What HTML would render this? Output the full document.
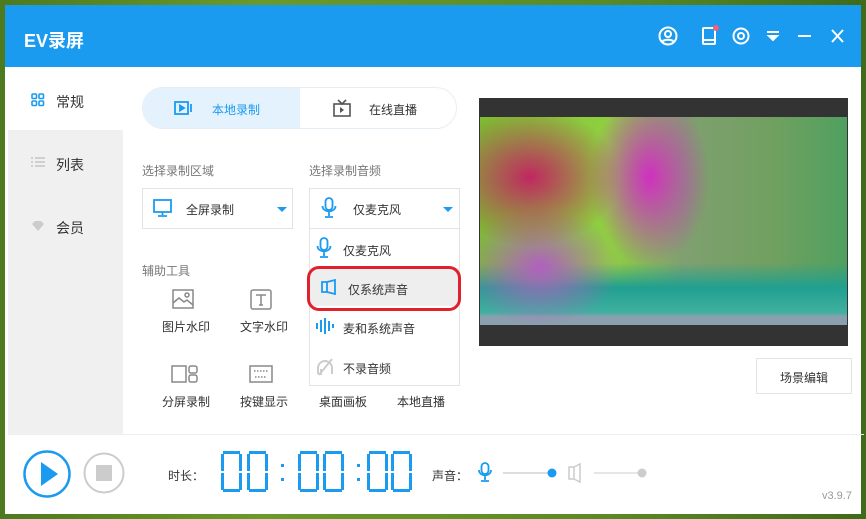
<!DOCTYPE html>
<html><head><meta charset="utf-8"><style>
*{margin:0;padding:0;box-sizing:border-box}
body{width:866px;height:519px;overflow:hidden;background:linear-gradient(90deg,#4d7a1e,#6a9a2a 30%,#5a8a26 70%,#3f6b1a);font-family:"Liberation Sans","Noto Sans CJK SC",sans-serif;position:relative}
.abs{position:absolute}
.win{left:5px;top:5px;width:856px;height:509px;background:#fff}
.hdr{left:5px;top:5px;width:856px;height:62px;background:#1a9bf0}
.t{color:#333;font-size:12px;white-space:nowrap}
.g{color:#777;font-size:12px}
</style></head><body>
<div class="abs win"></div>
<div class="abs hdr"></div>
<div class="abs" style="left:24px;top:27px;color:#fff;font-size:18px;font-weight:bold">EV录屏</div>
<svg class="abs" style="left:650px;top:22px" width="210" height="28" viewBox="0 0 210 28" fill="none" stroke="#fff" stroke-width="2">
<circle cx="18" cy="14" r="8.5"/><circle cx="18" cy="12" r="3"/><path d="M12 20c2-3 10-3 12 0"/>
<rect x="53" y="6" width="12" height="16" rx="1"/><path d="M53 18h12"/><circle cx="66" cy="6" r="3" fill="#f0607a" stroke="none"/>
<circle cx="91" cy="14" r="7.5"/><circle cx="91" cy="14" r="3"/>
<path d="M117 10h12M119 14h8l-4 4z" fill="#fff"/>
<path d="M148 14h13"/>
<path d="M182 8l11 12M193 8l-11 12"/>
</svg>
<div class="abs" style="left:8px;top:130px;width:115px;height:304px;background:#f0f0f0"></div>
<div class="abs" style="left:8px;top:434px;width:856px;height:1px;background:#eee"></div>
<svg class="abs" style="left:31px;top:93px" width="14" height="14" fill="none" stroke="#1a9bf0" stroke-width="1.6"><rect x="1" y="1" width="4.5" height="4.5" rx="1"/><rect x="8" y="1" width="4.5" height="4.5" rx="1"/><rect x="1" y="8" width="4.5" height="4.5" rx="1"/><rect x="8" y="8" width="4.5" height="4.5" rx="1"/></svg>
<div class="abs" style="left:56px;top:92px;font-size:14px;color:#333">常规</div>
<svg class="abs" style="left:31px;top:156px" width="14" height="12" stroke="#bbb" stroke-width="1.3"><path d="M0 2h2M4 2h10M0 6h2M4 6h10M0 10h2M4 10h10"/></svg>
<div class="abs" style="left:56px;top:155px;font-size:14px;color:#333">列表</div>
<svg class="abs" style="left:31px;top:220px" width="14" height="12"><path d="M1 4l3-3h6l3 3-6 7z" fill="#ccc"/></svg>
<div class="abs" style="left:56px;top:218px;font-size:14px;color:#333">会员</div>
<div class="abs" style="left:142px;top:87px;width:315px;height:42px;border:1px solid #e6eef5;border-radius:21px;background:#fff"></div>
<div class="abs" style="left:143px;top:88px;width:157px;height:40px;border-radius:20px 0 0 20px;background:#e3f2fd"></div>
<svg class="abs" style="left:174px;top:100px" width="20" height="16" fill="none" stroke="#1a9bf0" stroke-width="1.8"><rect x="1" y="2" width="13" height="12"/><path d="M17 4v8"/><path d="M6 5.5l4 2.5-4 2.5z" fill="#1a9bf0"/></svg>
<div class="abs" style="left:212px;top:101px;font-size:12px;color:#1a9bf0">本地录制</div>
<svg class="abs" style="left:333px;top:99px" width="18" height="18" fill="none" stroke="#555" stroke-width="1.6"><rect x="1" y="5" width="16" height="12"/><path d="M5 1l4 4 4-4"/><path d="M7 8l4 3-4 3z" fill="#555" stroke="none"/></svg>
<div class="abs" style="left:369px;top:101px;font-size:12px;color:#333">在线直播</div>
<div class="abs g" style="left:142px;top:162px">选择录制区域</div>
<div class="abs g" style="left:309px;top:162px">选择录制音频</div>
<div class="abs" style="left:142px;top:188px;width:151px;height:41px;border:1px solid #e3e3e3"></div>
<svg class="abs" style="left:153px;top:199px" width="20" height="18" fill="none" stroke="#1a9bf0" stroke-width="1.8"><rect x="1" y="1" width="17" height="12"/><path d="M9.5 13v3M5 17h9"/></svg>
<div class="abs t" style="left:186px;top:201px">全屏录制</div>
<div class="abs" style="left:277px;top:207px;border:5px solid transparent;border-top:5px solid #1a9bf0"></div>
<div class="abs" style="left:309px;top:188px;width:151px;height:41px;border:1px solid #e3e3e3"></div>
<svg class="abs" style="left:321px;top:197px" width="16" height="22" fill="none" stroke="#1a9bf0" stroke-width="1.8"><rect x="4.5" y="1" width="7" height="12" rx="3.5"/><path d="M1.5 9c0 7 13 7 13 0M8 15v4M4 20h8"/></svg>
<div class="abs t" style="left:353px;top:201px">仅麦克风</div>
<div class="abs" style="left:443px;top:207px;border:5px solid transparent;border-top:5px solid #1a9bf0"></div>
<div class="abs" style="left:309px;top:229px;width:151px;height:157px;border:1px solid #e3e3e3;border-top:none;background:#fff"></div>
<svg class="abs" style="left:316px;top:237px" width="16" height="22" fill="none" stroke="#1a9bf0" stroke-width="1.8"><rect x="4.5" y="1" width="7" height="12" rx="3.5"/><path d="M1.5 9c0 7 13 7 13 0M8 15v4M4 20h8"/></svg>
<div class="abs t" style="left:343px;top:242px">仅麦克风</div>
<div class="abs" style="left:310px;top:268px;width:149px;height:38px;background:#eee"></div>
<div class="abs" style="left:307px;top:266px;width:154px;height:45px;border:3px solid #e0202a;border-radius:12px"></div>
<svg class="abs" style="left:321px;top:279px" width="16" height="16" fill="none" stroke="#1a9bf0" stroke-width="1.8"><path d="M1 3h5v10H1zM6 3l8-2v14l-8-2"/></svg>
<div class="abs t" style="left:348px;top:281px">仅系统声音</div>
<svg class="abs" style="left:315px;top:318px" width="20" height="16" stroke="#1a9bf0" stroke-width="2"><path d="M2 5v6M6 2v12M10 0v16M14 3v10M18 6v4"/></svg>
<div class="abs t" style="left:343px;top:320px">麦和系统声音</div>
<svg class="abs" style="left:315px;top:357px" width="20" height="20" fill="none" stroke="#ccc" stroke-width="2"><path d="M3 17v-6a7 7 0 0 1 14 0v6M3 17h3v-5M17 2L4 18"/></svg>
<div class="abs t" style="left:343px;top:360px">不录音频</div>
<div class="abs g" style="left:142px;top:262px">辅助工具</div>
<svg class="abs" style="left:172px;top:289px" width="22" height="20" fill="none" stroke="#888" stroke-width="1.5"><rect x="1" y="1" width="20" height="18"/><path d="M1 14l6-5 5 4 3-2 6 5"/><circle cx="15" cy="6" r="2"/></svg>
<div class="abs t" style="left:162px;top:318px">图片水印</div>
<svg class="abs" style="left:250px;top:289px" width="22" height="21" fill="none" stroke="#888" stroke-width="1.5"><rect x="1" y="1" width="20" height="19" rx="2"/><path d="M6 6h10M11 6v10M9 16h4"/></svg>
<div class="abs t" style="left:240px;top:318px">文字水印</div>
<svg class="abs" style="left:171px;top:365px" width="27" height="18" fill="none" stroke="#888" stroke-width="1.5"><rect x="1" y="1" width="14" height="16"/><rect x="18" y="1" width="8" height="7" rx="2"/><rect x="18" y="10" width="8" height="7" rx="2"/></svg>
<div class="abs t" style="left:162px;top:393px">分屏录制</div>
<svg class="abs" style="left:249px;top:365px" width="24" height="18" fill="none" stroke="#888" stroke-width="1.5"><rect x="1" y="1" width="22" height="16"/><path d="M5 6h14M6 12h12" stroke-dasharray="1.5 1.5"/></svg>
<div class="abs t" style="left:240px;top:393px">按键显示</div>
<div class="abs t" style="left:319px;top:393px">桌面画板</div>
<div class="abs t" style="left:397px;top:393px">本地直播</div>
<div class="abs" style="left:479px;top:98px;width:369px;height:248px;background:#333"></div>
<div class="abs" style="left:480px;top:117px;width:367px;height:208px;background:
radial-gradient(ellipse 60px 90px at 170px 60px,#d030c0,transparent),
radial-gradient(ellipse 90px 70px at 50px 60px,#c02860,transparent),
radial-gradient(ellipse 80px 60px at 60px 150px,#b060c0,transparent),
linear-gradient(180deg,transparent 70%,#20a090 82%,#40b0a0 94%,#8aa0b0 96%),
linear-gradient(90deg,#7ac030,#90d040 35%,#80a070 55%,#70a060 80%,#50a060)"></div>
<div class="abs" style="left:756px;top:358px;width:96px;height:36px;border:1px solid #e3e3e3"></div>
<div class="abs t" style="left:780px;top:369px">场景编辑</div>
<svg class="abs" style="left:22px;top:450px" width="52" height="48"><circle cx="25" cy="24" r="22.5" fill="none" stroke="#1a9bf0" stroke-width="2.5"/><path d="M19 12v24l17-12z" fill="#1a9bf0"/></svg>
<svg class="abs" style="left:83px;top:452px" width="44" height="44"><circle cx="21" cy="21" r="19.5" fill="none" stroke="#ccc" stroke-width="2"/><rect x="13" y="13" width="16" height="16" fill="#ccc"/></svg>
<div class="abs t" style="left:168px;top:467px">时长：</div>
<svg class="abs" style="left:215px;top:450px" width="200" height="46">
<defs><g id="d" fill="none" stroke="#1a9bf0" stroke-width="3"><path d="M3 2.5h17M3 40.5h17M2.5 4v17M2.5 23v17M20.5 4v17M20.5 23v17"/><path d="M6 6h11M6 37h11" stroke-width="1" opacity="0"/></g></defs>
<use href="#d" x="5"/><use href="#d" x="31"/>
<rect x="66" y="14" width="3" height="3" fill="#1a9bf0"/><rect x="66" y="28" width="3" height="3" fill="#1a9bf0"/>
<use href="#d" x="82"/><use href="#d" x="107"/>
<rect x="142" y="14" width="3" height="3" fill="#1a9bf0"/><rect x="142" y="28" width="3" height="3" fill="#1a9bf0"/>
<use href="#d" x="151"/><use href="#d" x="175"/>
</svg>
<div class="abs t" style="left:432px;top:467px">声音：</div>
<svg class="abs" style="left:476px;top:461px" width="190" height="24"><g fill="none" stroke="#1a9bf0" stroke-width="1.8"><rect x="5.5" y="2" width="7" height="11" rx="3.5"/><path d="M3 9c0 7 12 7 12 0M9 15v4M5 20h8"/></g><path d="M27 12h48" stroke="#bbb"/><circle cx="76" cy="12" r="4.5" fill="#1a9bf0"/><path d="M93 6h5v12h-5zM98 6l6-3v18l-6-3" fill="none" stroke="#ccc" stroke-width="1.5"/><path d="M118 12h48" stroke="#ccc"/><circle cx="166" cy="12" r="4.5" fill="#ccc"/></svg>
<div class="abs" style="left:822px;top:490px;font-size:11px;color:#999">v3.9.7</div>
</body></html>
